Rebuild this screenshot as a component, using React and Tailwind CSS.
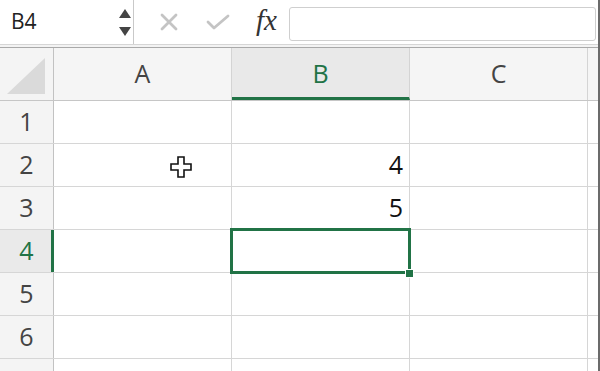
const FONT = { fontFamily: '"Open Sans", "Noto Sans", Arial, sans-serif' }

const COLS = ['A', 'B', 'C']
const ROWS = [1, 2, 3, 4, 5, 6, 7]
const VALUES = { 'B2': '4', 'B3': '5' }
const ACTIVE = { col: 'B', row: 4 }

function CrossCursor() {
  return (
    <svg width="24" height="24" viewBox="0 0 24 24" className="absolute left-[115px] top-[11px]">
      <path
        d="M9 2h6v7h7v6h-7v7H9v-7H2V9h7z"
        fill="#fff"
        stroke="#111"
        strokeWidth="1.6"
        strokeLinejoin="miter"
      />
    </svg>
  )
}

function FormulaBar() {
  return (
    <div className="flex h-[44px] bg-white">
      {/* Name box */}
      <div className="flex w-[134px] items-center justify-between border-r border-[#c9c9c9] pl-[11px] pr-[2px]">
        <span className="text-[21px] text-[#222]">B4</span>
        <div className="flex flex-col gap-[9px]">
          <svg width="12" height="9" viewBox="0 0 12 9"><path d="M6 0L12 9H0z" fill="#444" /></svg>
          <svg width="12" height="9" viewBox="0 0 12 9"><path d="M0 0h12L6 9z" fill="#444" /></svg>
        </div>
      </div>
      {/* Cancel / Enter / fx */}
      <div className="flex items-center pl-[26px]">
        <svg width="18" height="18" viewBox="0 0 18 18">
          <path d="M2 2l14 14M16 2L2 16" stroke="#c4c4c4" strokeWidth="2.8" strokeLinecap="round" />
        </svg>
        <svg width="24" height="16" viewBox="0 0 24 16" className="ml-[28px]">
          <path d="M2 8l6 6L22 2" stroke="#c4c4c4" strokeWidth="2.8" fill="none" strokeLinecap="round" strokeLinejoin="round" />
        </svg>
        <span
          className="ml-[26px] mb-[2px] text-[29px] italic text-[#333]"
          style={{ fontFamily: '"Liberation Serif", "DejaVu Serif", serif' }}
        >
          fx
        </span>
      </div>
      <div className="ml-[12px] mr-[2px] mt-[7px] h-[34px] flex-1 rounded-[3px] border border-[#cfcfcf] bg-white" />
    </div>
  )
}

function SelectAll() {
  return (
    <div className="flex w-[54px] items-center justify-center border-r border-[#c2c2c2] bg-[#f4f4f4]">
      <svg width="42" height="40" viewBox="0 0 42 40" className="mt-[4px] ml-[-2px]">
        <path d="M2 38L40 2v36z" fill="#dadada" />
      </svg>
    </div>
  )
}

export default function App() {
  return (
    <div className="h-[371px] w-[600px] overflow-hidden border-r-2 border-[#6b6b6b] bg-white" style={FONT}>
      <FormulaBar />
      <div className="h-[3px] border-t border-[#d6d6d6] bg-[#f3f3f3]" />
      <div className="h-px bg-[#a9a9a9]" />

      {/* Column headers */}
      <div className="flex h-[53px] border-b border-[#c6c6c6]">
        <SelectAll />
        {COLS.map(c => {
          const active = c === ACTIVE.col
          return (
            <div
              key={c}
              className={`flex w-[178px] items-center justify-center border-r border-[#d4d4d4] text-[25px] ${
                active ? 'border-b-[3px] border-b-[#217346] bg-[#e9e9e9] pt-[3px] text-[#217346]' : 'bg-[#f5f5f5] text-[#444]'
              }`}
            >
              {c}
            </div>
          )
        })}
        <div className="flex-1 bg-[#f5f5f5]" />
      </div>

      {/* Rows */}
      {ROWS.map(r => {
        const activeRow = r === ACTIVE.row
        const last = r === ROWS.length
        return (
          <div key={r} className="flex h-[43px] border-b border-[#d6d6d6]">
            <div
              className={`flex w-[54px] items-center justify-center border-r text-[25px] ${
                activeRow
                  ? 'border-r-[3px] border-r-[#217346] bg-[#eaeaea] pl-[2px] text-[#217346]'
                  : 'border-[#c2c2c2] bg-[#f4f4f4] text-[#444]'
              }`}
            >
              {last ? '' : r}
            </div>
            {COLS.map(c => {
              const key = `${c}${r}`
              const selected = activeRow && c === ACTIVE.col
              return (
                <div
                  key={c}
                  className="relative flex w-[178px] items-center justify-end border-r border-[#d6d6d6] pr-[6px] text-[25px] text-[#111]"
                >
                  {VALUES[key]}
                  {key === 'A2' && <CrossCursor />}
                  {selected && (
                    <>
                      <div className="absolute left-[-2px] top-[-2px] z-10 h-[46px] w-[181px] border-[3px] border-[#217346]" />
                      <div className="absolute right-[-5px] bottom-[-6px] z-20 h-[9px] w-[9px] border border-white bg-[#217346]" />
                    </>
                  )}
                </div>
              )
            })}
            <div className="flex-1" />
          </div>
        )
      })}
    </div>
  )
}
